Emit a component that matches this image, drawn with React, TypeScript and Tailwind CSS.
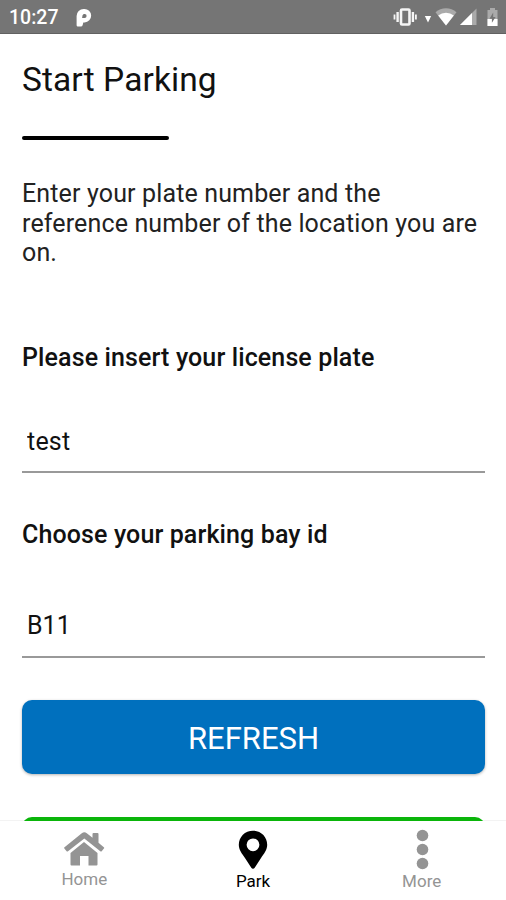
const tabs = [
  { label: 'Home', icon: HomeIcon, active: false, spacing: 'mt-1.5' },
  { label: 'Park', icon: PinIcon, active: true, spacing: 'mt-2' },
  { label: 'More', icon: MoreIcon, active: false, spacing: 'mt-2' },
]

function HomeIcon() {
  return (
    <svg className="relative top-px" width="42" height="34" viewBox="0 0 42 34" fill="currentColor">
      <path d="M21 10 34.500 21V32.500a1 1 0 0 1-1 1h-8v-9.500h-8.500v9.500H8.500a1 1 0 0 1-1-1V21Z" />
      <path d="M29.500 2.100a1 1 0 0 1 1-1h4a1 1 0 0 1 1 1v8.700l5.300 4.400a1 1 0 0 1 .1 1.400l-2.200 2.600a1 1 0 0 1-1.400.1L21.300 6.500 5 19.300a1 1 0 0 1-1.400-.1L1.400 16.600a1 1 0 0 1 .1-1.400L18.800 1.200a4 4 0 0 1 5 0l5.700 4.600Z" />
    </svg>
  )
}

function PinIcon() {
  return (
    <svg width="30" height="40" viewBox="0 0 30 40" fill="currentColor">
      <path
        fillRule="evenodd"
        d="M15 .8C7 .8.8 7 .8 14.800c0 5.200 2.900 8.500 6.500 13.700l6 9.300a2 2 0 0 0 3.400 0l6-9.300c3.600-5.200 6.500-8.500 6.500-13.700C29.200 7 23 .8 15 .8Zm0 7.600a6.400 6.400 0 1 1 0 12.800 6.400 6.400 0 0 1 0-12.800Z"
      />
    </svg>
  )
}

function MoreIcon() {
  return (
    <svg width="14" height="42" viewBox="0 0 14 42" fill="currentColor">
      <circle cx="7.500" cy="6.500" r="5.800" />
      <circle cx="7.500" cy="20.500" r="5.800" />
      <circle cx="7.500" cy="34.500" r="5.800" />
    </svg>
  )
}

function StatusBar() {
  return (
    <header className="flex h-[34px] shrink-0 items-center border-b border-[#616161] bg-[#757575] pl-[9px] pr-[7px] text-white">
      <span className="pt-[3px] text-[19.5px] font-medium leading-none">10:27</span>
      <svg className="ml-[17px] mt-[2px]" width="18" height="20" viewBox="0 0 18 20">
        <path
          fill="#fff"
          fillRule="evenodd"
          d="M8.700 1h.6a6.700 6.700 0 0 1 .3 13.400H8.300L7.700 17a2 2 0 0 1-2 1.500H3.200c-1 0-1.600-.6-1.600-1.600V8a7 7 0 0 1 7.100-7Zm1 4.900c-1.300 0-2 .7-2.200 1.700l-.4 2.300h2.400a2 2 0 0 0 .2-4Z"
        />
      </svg>
      <div className="ml-auto flex items-center">
        <svg width="24" height="20" viewBox="0 0 24 20" fill="none" stroke="#f5f5f5">
          <rect x="8" y="2.500" width="8.500" height="15" rx="1" strokeWidth="2.600" />
          <path d="M4.600 5v10M19.900 5v10" strokeWidth="2.400" />
          <path d="M1.500 7.500v5M22.900 7.500v5" strokeWidth="1.800" />
        </svg>
        <svg className="ml-[7px] mt-[4px]" width="8" height="8" viewBox="0 0 8 8">
          <path fill="#fff" d="M.8 1h6.400L4 7.500Z" />
        </svg>
        <svg className="ml-[3px]" width="22" height="20" viewBox="0 0 22 20">
          <path fill="#aaa" d="M.5 5.200a16 16 0 0 1 21 0L11 18.500Z" />
          <path fill="#fff" d="M3.200 8.600a12.500 12.500 0 0 1 15.600 0L11 18.500Z" />
        </svg>
        <svg className="ml-[2px]" width="18" height="20" viewBox="0 0 18 20">
          <path fill="#aaa" d="M17.500 1.500v16.500H1Z" />
          <path fill="#fff" d="M13 6v12H1Z" />
        </svg>
        <svg className="ml-[9px]" width="13" height="20" viewBox="0 0 13 20">
          <path fill="#aaa" d="M4 1h5v2h2.500v16h-10V3H4Z" />
          <path fill="#fff" d="M1.500 12h10v7h-10Z" />
          <path fill="#757575" d="m7.200 5.500-3.700 6.200h2.400v4l3.700-5.700H7.200Z" />
        </svg>
      </div>
    </header>
  )
}

export default function App() {
  return (
    <div className="flex h-[900px] w-[506px] flex-col overflow-hidden bg-white font-['Roboto',sans-serif] text-[#111]">
      <StatusBar />

      <main className="min-h-0 flex-1 overflow-hidden pl-[22px] pr-[21px] shadow-[inset_0_-1px_0_#f3f3f3]">
        <h1 className="mt-[26px] text-[33.5px] leading-10 tracking-[0.1px]">Start Parking</h1>
        <div className="mt-9 h-1 w-[147px] rounded-full bg-black" />
        <p className="mt-[39px] text-[25px] leading-[29.5px] tracking-[0.14px] text-[#222]">
          Enter your plate number and the
          <br />
          reference number of the location you are
          <br />
          on.
        </p>

        <label htmlFor="plate" className="mt-[75px] block text-[25px] font-medium leading-[30px] tracking-[0.12px]">
          Please insert your license plate
        </label>
        <input
          id="plate"
          defaultValue="test"
          className="mt-[38px] block h-[62px] w-full border-b-2 border-[#999] px-[5px] pt-[2px] text-[25px] tracking-[0.2px] outline-none"
        />

        <label htmlFor="bay" className="mt-[47px] block text-[25px] font-medium leading-[30px] tracking-[0.12px]">
          Choose your parking bay id
        </label>
        <input
          id="bay"
          defaultValue="B11"
          className="mt-[45px] block h-[63px] w-full border-b-2 border-[#999] px-[5px] text-[25px] outline-none"
        />

        <button className="mt-[42px] block h-[74px] w-full rounded-[10px] bg-[#0070be] pt-1.5 text-[31px] text-white shadow-[0_1px_3px_rgba(0,0,0,0.3)]">
          REFRESH
        </button>
        <button aria-label="Start" className="mt-[43px] block h-[74px] w-full rounded-[10px] bg-[#0ab50a]" />
      </main>

      <nav className="flex h-[79px] shrink-0 bg-white text-[#949494]">
        {tabs.map((tab) => (
          <div
            key={tab.label}
            className={tab.active ? 'flex flex-1 flex-col items-center text-black' : 'flex flex-1 flex-col items-center'}
          >
            <div className={`flex h-[42px] items-center ${tab.spacing}`}>
              <tab.icon />
            </div>
            <span className="text-[17px] leading-5">{tab.label}</span>
          </div>
        ))}
      </nav>
    </div>
  )
}
